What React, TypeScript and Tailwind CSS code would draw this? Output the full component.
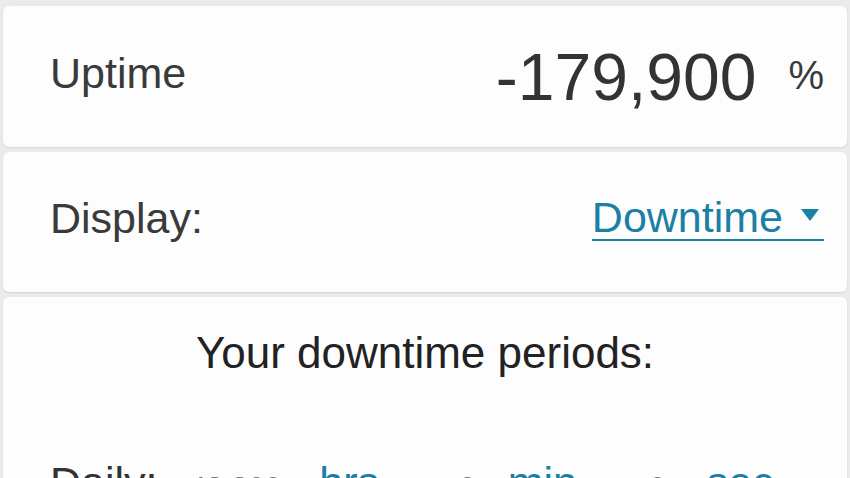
import React from "react";

const font = { fontFamily: '"Liberation Sans", Arial, sans-serif' };

function Card({ className = "", children }: { className?: string; children: React.ReactNode }) {
  return (
    <div className={`bg-[#fdfdfd] rounded-[6px] shadow-[0_1px_2px_rgba(0,0,0,0.10)] ${className}`}>
      {children}
    </div>
  );
}

export default function App() {
  return (
    <div className="min-h-screen bg-[#ebebeb] pt-[6px] px-[3px] flex flex-col gap-[5px] overflow-hidden" style={font}>
      {/* Uptime value */}
      <Card className="h-[141px] flex items-center justify-between pl-[47px] pr-[23px]">
        <span className="text-[43px] leading-none text-[#3a3a3a] pb-[6px]">Uptime</span>
        <div className="flex items-start">
          <span className="text-[66px] leading-none text-[#333]">-179,900</span>
          <span className="text-[40px] leading-none text-[#3a3a3a] ml-[32px] mt-[11px]">%</span>
        </div>
      </Card>

      {/* Display selector */}
      <Card className="h-[140px] flex items-center justify-between pl-[47px] pr-[23px] pb-[8px]">
        <span className="text-[43px] leading-none text-[#3a3a3a]">Display:</span>
        <a className="inline-flex items-center leading-none text-[43px] text-[#1b7fa6] border-b-2 border-[#1b7fa6] cursor-pointer">
          <span>Downtime</span>
          <svg width="18" height="12" viewBox="0 0 18 12" className="ml-[18px] mr-[5px] mt-[-4px]">
            <path d="M0 0 H18 L9 12 Z" fill="#1b7fa6" />
          </svg>
        </a>
      </Card>

      {/* Downtime periods */}
      <Card className="h-[200px] pt-[34px]">
        <div className="text-center text-[44px] leading-none text-[#222]">Your downtime periods:</div>
        <div className="flex items-baseline mt-[86px] pl-[47px] text-[43px] leading-none">
          <span className="text-[#333]">Daily:</span>
          <span className="ml-[32px] text-[30px] text-[#777]">43,200</span>
          <span className="ml-[38px] text-[#1b7fa6]">hrs</span>
          <span className="ml-[80px] text-[30px] text-[#777]">0</span>
          <span className="ml-[32px] text-[#1b7fa6]">min</span>
          <span className="ml-[72px] text-[30px] text-[#777]">0</span>
          <span className="ml-[41px] text-[#1b7fa6]">sec</span>
        </div>
      </Card>
    </div>
  );
}
